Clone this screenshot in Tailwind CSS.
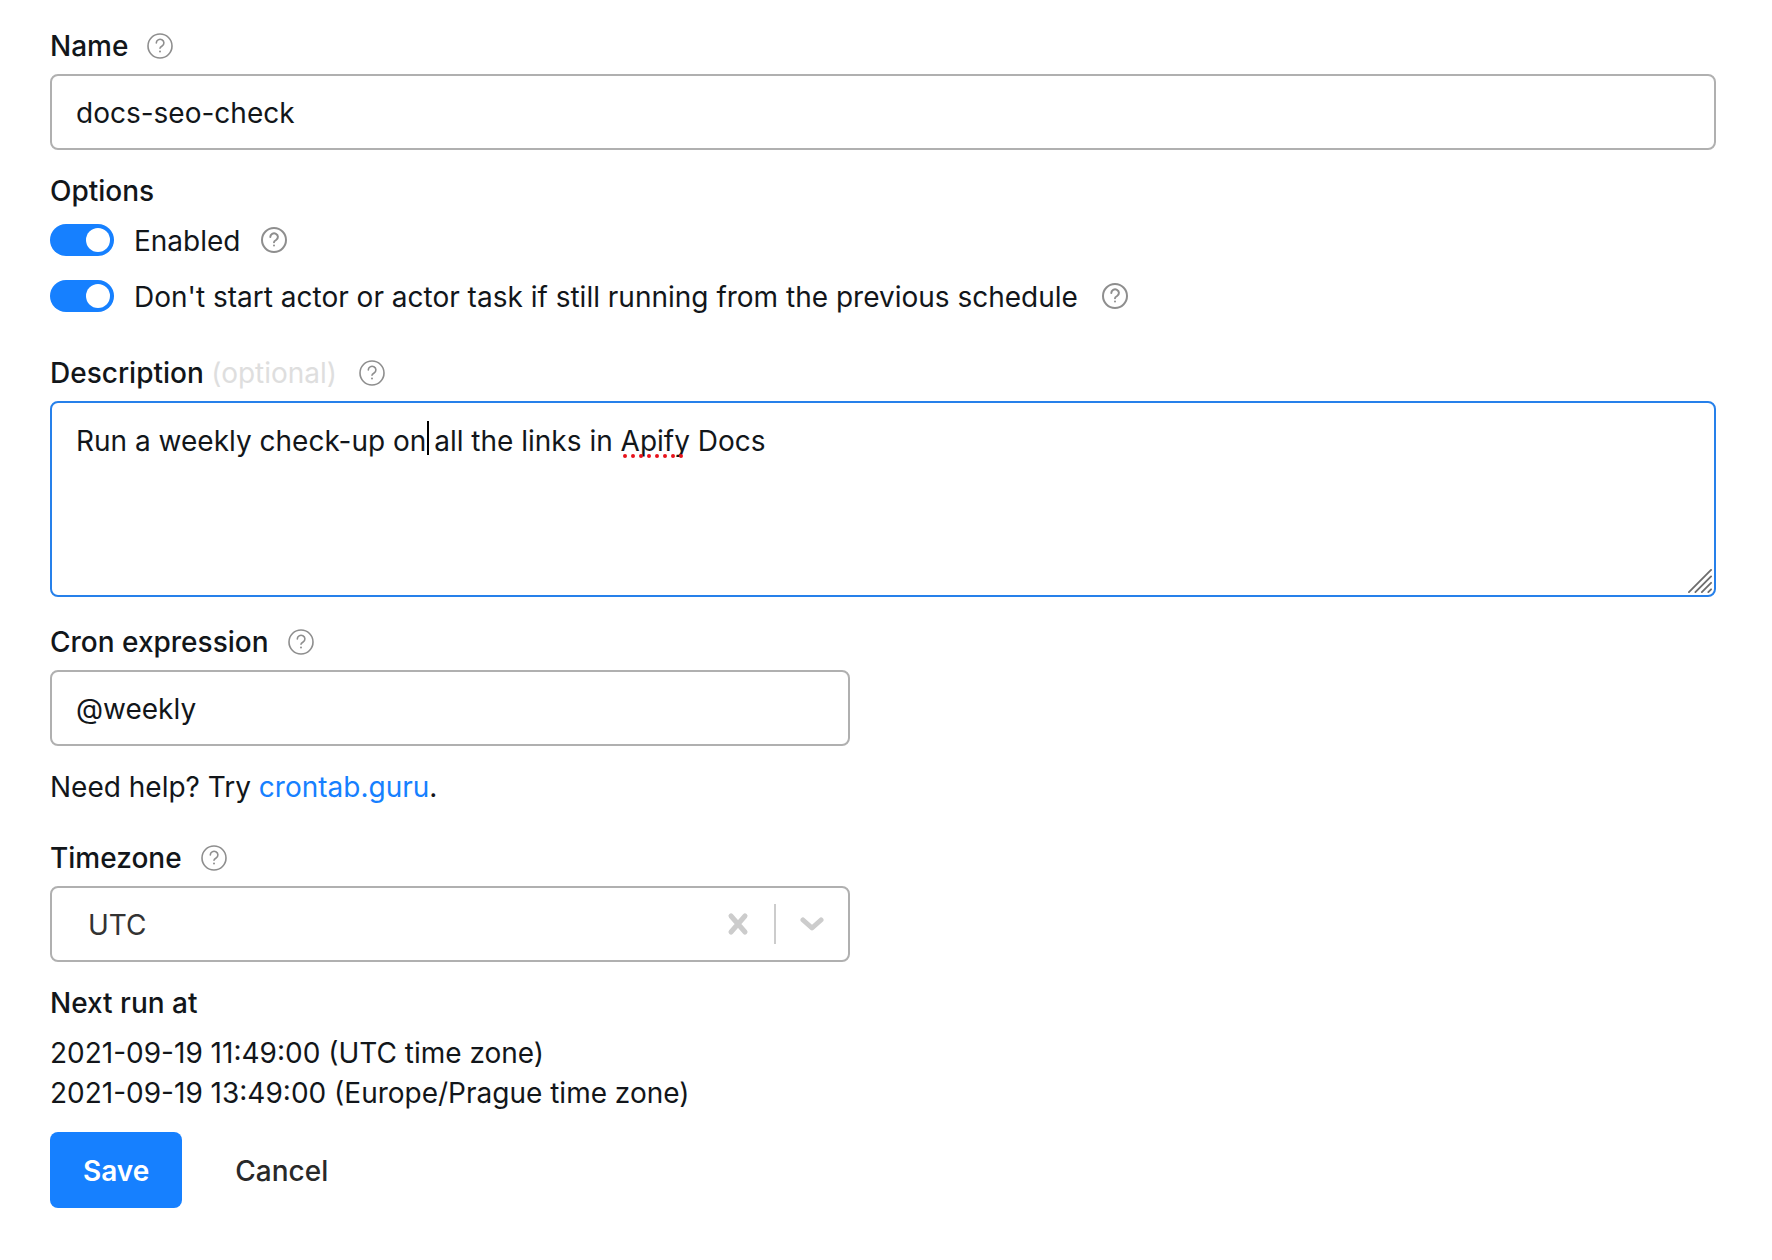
<!DOCTYPE html>
<html lang="en">
<head>
<meta charset="utf-8">
<meta name="viewport" content="width=device-width, initial-scale=1">
<title>Edit schedule</title>
<script src="https://cdn.jsdelivr.net/npm/@tailwindcss/browser@4"></script>
</head>
<body class="bg-white font-['Inter',sans-serif] text-[28px] leading-10 text-[#12161a]">
<svg class="hidden" aria-hidden="true">
  <symbol id="help" viewBox="0 0 26 26">
    <circle cx="13" cy="13" r="12" fill="none" stroke="currentColor"/>
    <path d="M9.3 10a3.8 3.6 0 1 1 5.8 3c-1.3.8-2.1 1.3-2.1 2.3" fill="none" stroke="currentColor" stroke-linecap="round"/>
    <circle cx="13" cy="18.6" r="1" fill="currentColor" stroke="none"/>
  </symbol>
</svg>
<form class="flex flex-col pt-[26px] pr-14 pb-12 pl-[50px]">
  <div class="flex items-center gap-[19px]">
    <label for="name" class="font-medium">Name</label>
    <svg class="size-[26px] stroke-[1.6] text-[#8e8e8e]" role="img" aria-label="Help"><use href="#help"/></svg>
  </div>
  <input id="name" type="text" value="docs-seo-check" class="mt-2 h-[76px] w-full rounded-lg border-2 border-[#b0b0b0] px-6 pt-[2px] outline-none">

  <fieldset class="mt-[21px]">
    <legend class="float-left w-full font-medium">Options</legend>
    <div class="clear-both flex flex-col gap-[14px] pt-2">
      <div class="flex items-center gap-5">
        <label class="flex items-center gap-5">
          <input type="checkbox" role="switch" checked class="peer sr-only">
          <span class="flex h-8 w-16 items-center justify-start rounded-full bg-[#b0b0b0] p-1 peer-checked:justify-end peer-checked:bg-[#1680ff]"><span class="size-6 rounded-full bg-white"></span></span>
          <span class="pt-[2px]">Enabled</span>
        </label>
        <svg class="size-[26px] stroke-2 text-[#8e8e8e]" role="img" aria-label="Help"><use href="#help"/></svg>
      </div>
      <div class="flex items-center gap-6">
        <label class="flex items-center gap-5">
          <input type="checkbox" role="switch" checked class="peer sr-only">
          <span class="flex h-8 w-16 items-center justify-start rounded-full bg-[#b0b0b0] p-1 peer-checked:justify-end peer-checked:bg-[#1680ff]"><span class="size-6 rounded-full bg-white"></span></span>
          <span class="pt-[2px]">Don't start actor or actor task if still running from the previous schedule</span>
        </label>
        <svg class="size-[26px] stroke-2 text-[#8e8e8e]" role="img" aria-label="Help"><use href="#help"/></svg>
      </div>
    </div>
  </fieldset>

  <div class="mt-9 flex items-center gap-[22px]">
    <label for="description" class="font-medium">Description <span class="font-normal text-[#dedede]">(optional)</span></label>
    <svg class="size-[26px] stroke-[1.6] text-[#8e8e8e]" role="img" aria-label="Help"><use href="#help"/></svg>
  </div>
  <div class="relative mt-2 flex">
    <textarea id="description" spellcheck="false" class="h-[196px] w-full resize-none rounded-lg border-2 border-[#2680ea] px-6 py-[18px] leading-10 outline-none">Run a weekly check-up on all the links in Apify Docs</textarea>
    <!-- text cursor -->
    <span class="pointer-events-none absolute top-[20px] left-[377px] h-[34px] w-[2px] bg-black"></span>
    <!-- spelling mark -->
    <svg class="pointer-events-none absolute top-[53px] left-[572px] h-1 w-[64px]" viewBox="0 0 64 4" aria-hidden="true"><path d="M3 2H62" stroke="#e8121b" stroke-width="4" stroke-linecap="round" stroke-dasharray="0 8"/></svg>
    <!-- resize handle -->
    <svg class="pointer-events-none absolute right-1 bottom-1 size-[24px]" viewBox="0 0 26 26" fill="none" stroke="#6e6e6e" stroke-width="2" stroke-linecap="round" aria-hidden="true"><path d="M1 25 25 1M8 25 25 8M15 25 25 15M22 25 25 22"/></svg>
  </div>

  <div class="mt-[25px] flex items-center gap-[19px]">
    <label for="cron" class="font-medium">Cron expression</label>
    <svg class="size-[26px] stroke-[1.6] text-[#8e8e8e]" role="img" aria-label="Help"><use href="#help"/></svg>
  </div>
  <input id="cron" type="text" value="@weekly" class="mt-2 h-[76px] w-[48%] rounded-lg border-2 border-[#b0b0b0] px-6 pt-[2px] outline-none">
  <p class="mt-[21px]">Need help? Try <a href="https://crontab.guru" class="text-[#1680ff]">crontab.guru</a>.</p>

  <div class="mt-[31px] flex items-center gap-[19px]">
    <label for="timezone" class="font-medium">Timezone</label>
    <svg class="size-[26px] stroke-[1.6] text-[#8e8e8e]" role="img" aria-label="Help"><use href="#help"/></svg>
  </div>
  <div class="mt-2 flex h-[76px] w-[48%] items-center rounded-lg border-2 border-[#b0b0b0] pr-6">
    <select id="timezone" class="h-full min-w-0 flex-1 appearance-none bg-transparent pt-[2px] pl-9 text-[#333] outline-none"><option>UTC</option></select>
    <button type="button" aria-label="Clear timezone" class="mr-6"><svg class="size-6" viewBox="0 0 24 24" fill="none" stroke="#ccc" stroke-width="5" stroke-linecap="round"><path d="m5 4 14 16M19 4 5 20"/></svg></button>
    <span class="h-10 w-[2px] bg-[#ccc]"></span>
    <svg class="ml-6 h-4 w-6" viewBox="0 0 24 16" fill="none" stroke="#ccc" stroke-width="5" stroke-linecap="round" stroke-linejoin="round" aria-hidden="true"><path d="m3 4 9 8 9-8"/></svg>
  </div>

  <h2 class="mt-[21px] font-medium">Next run at</h2>
  <p class="mt-[10px]">2021-09-19 11:49:00 (UTC time zone)<br>2021-09-19 13:49:00 (Europe/Prague time zone)</p>

  <div class="mt-[19px] flex items-center gap-5">
    <button type="submit" class="h-[76px] rounded-lg bg-[#1680ff] px-[33px] pt-[2px] font-semibold text-white">Save</button>
    <button type="button" class="h-[76px] px-[33px] pt-[2px] font-medium text-[#292929]">Cancel</button>
  </div>
</form>
</body>
</html>
